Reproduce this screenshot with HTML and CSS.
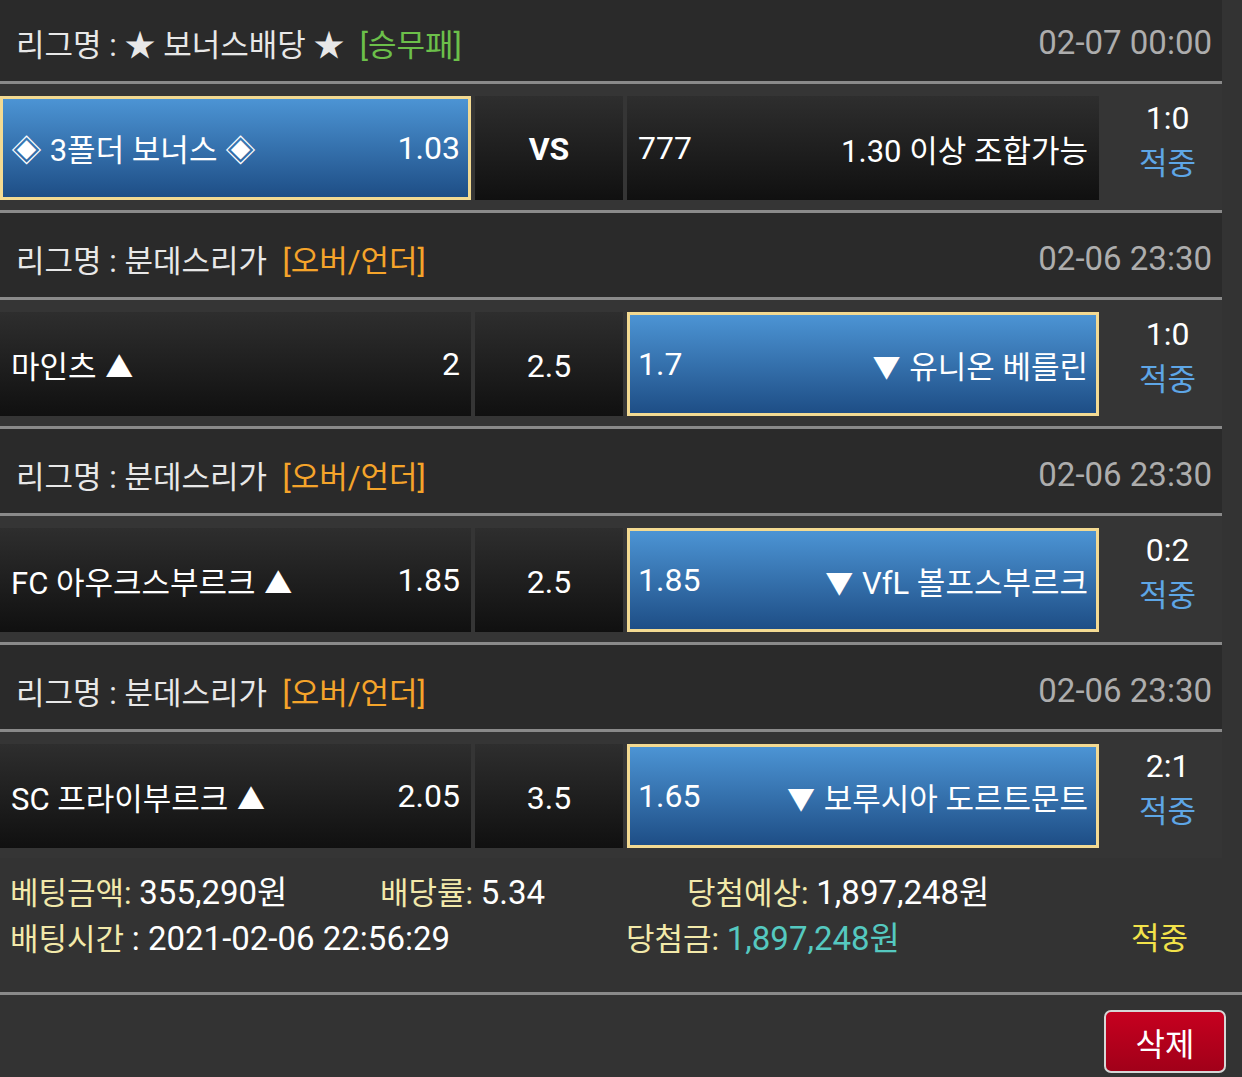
FILE: index.html
```html
<!DOCTYPE html>
<html lang="ko">
<head>
<meta charset="utf-8">
<title>베팅내역</title>
<link rel="stylesheet" href="styles.css">
</head>
<body>
<div class="list">
  <section class="game">
    <div class="league"><span class="lg-name">리그명 : ★ 보너스배당 ★ &nbsp;<span class="type-win">[승무패]</span></span><span class="date">02-07 00:00</span></div>
    <div class="row">
      <div class="cell home sel"><span class="team">◈ 3폴더 보너스 ◈</span><span class="odd">1.03</span></div>
      <div class="cell mid"><span class="vs">VS</span></div>
      <div class="cell away"><span class="odd">777</span><span class="team">1.30 이상 조합가능</span></div>
      <div class="score"><span class="sc">1:0</span><span class="res">적중</span></div>
    </div>
  </section>
  <section class="game">
    <div class="league"><span class="lg-name">리그명 : 분데스리가 &nbsp;<span class="type-ou">[오버/언더]</span></span><span class="date">02-06 23:30</span></div>
    <div class="row">
      <div class="cell home"><span class="team">마인츠 <span class="arw">▲</span></span><span class="odd">2</span></div>
      <div class="cell mid"><span class="line-val">2.5</span></div>
      <div class="cell away sel"><span class="odd">1.7</span><span class="team"><span class="arw">▼</span> 유니온 베를린</span></div>
      <div class="score"><span class="sc">1:0</span><span class="res">적중</span></div>
    </div>
  </section>
  <section class="game">
    <div class="league"><span class="lg-name">리그명 : 분데스리가 &nbsp;<span class="type-ou">[오버/언더]</span></span><span class="date">02-06 23:30</span></div>
    <div class="row">
      <div class="cell home"><span class="team">FC 아우크스부르크 <span class="arw">▲</span></span><span class="odd">1.85</span></div>
      <div class="cell mid"><span class="line-val">2.5</span></div>
      <div class="cell away sel"><span class="odd">1.85</span><span class="team"><span class="arw">▼</span> VfL 볼프스부르크</span></div>
      <div class="score"><span class="sc">0:2</span><span class="res">적중</span></div>
    </div>
  </section>
  <section class="game">
    <div class="league"><span class="lg-name">리그명 : 분데스리가 &nbsp;<span class="type-ou">[오버/언더]</span></span><span class="date">02-06 23:30</span></div>
    <div class="row last">
      <div class="cell home"><span class="team">SC 프라이부르크 <span class="arw">▲</span></span><span class="odd">2.05</span></div>
      <div class="cell mid"><span class="line-val">3.5</span></div>
      <div class="cell away sel"><span class="odd">1.65</span><span class="team"><span class="arw">▼</span> 보루시아 도르트문트</span></div>
      <div class="score"><span class="sc">2:1</span><span class="res">적중</span></div>
    </div>
  </section>
</div>
<div class="summary">
  <div class="sum-line">
    <span class="item w370"><span class="lbl">베팅금액:</span> <span class="val">355,290원</span></span>
    <span class="item w307"><span class="lbl">배당률:</span> <span class="val">5.34</span></span>
    <span class="item"><span class="lbl">당첨예상:</span> <span class="val">1,897,248원</span></span>
  </div>
  <div class="sum-line">
    <span class="item w616"><span class="lbl">배팅시간</span> <span class="val">: 2021-02-06 22:56:29</span></span>
    <span class="item w505"><span class="lbl">당첨금:</span> <span class="val win-amt">1,897,248원</span></span>
    <span class="item"><span class="hit">적중</span></span>
  </div>
</div>
<div class="actions">
  <button class="del" type="button">삭제</button>
</div>
</body>
</html>
```

FILE: styles.css
```css
body {
  margin: 0;
  background: #333333;
  color: #ffffff;
  font-family: Roboto, "Noto Sans CJK KR", sans-serif;
  font-size: 31px;
  overflow: hidden;
}

.list {
  width: 1222px;
  margin-top: -3px;
}

.league {
  height: 87px;
  box-sizing: border-box;
  border-bottom: 3px solid #8a8a8a;
  background: #2a2a2a;
  display: flex;
  align-items: center;
  justify-content: space-between;
  padding: 6px 10px 0 16px;
  white-space: nowrap;
}

.lg-name {
  color: #e8e8e8;
}

.type-win { color: #6cc04a; }
.type-ou { color: #f5a42a; }

.date {
  font-size: 33px;
  color: #adadad;
}

.row {
  height: 129px;
  box-sizing: border-box;
  border-bottom: 3px solid #8a8a8a;
  background: #353535;
  display: flex;
  padding: 12px 0 10px;
}

.row.last {
  height: 126px;
  border-bottom: none;
}

.cell {
  height: 104px;
  box-sizing: border-box;
  display: flex;
  align-items: center;
  justify-content: space-between;
  background: linear-gradient(#2e2e2e, #101010);
  padding: 0 11px;
  white-space: nowrap;
}

.home { width: 471px; }

.mid {
  width: 148px;
  margin-left: 4px;
  justify-content: center;
}

.away {
  width: 472px;
  margin-left: 4px;
}

.cell.sel {
  border: 3px solid #f3da92;
  background: linear-gradient(#4c94d4, #1e4e86);
  padding: 0 8px;
}

.arw {
  font-size: 28px;
  margin: 0 1px;
}

.odd { font-size: 32px; }

.vs {
  font-size: 32px;
  font-weight: bold;
  padding-top: 2px;
}

.line-val {
  font-size: 32px;
  padding-top: 4px;
}

.score {
  flex: 1;
  display: flex;
  flex-direction: column;
  align-items: center;
  line-height: 45px;
  padding-left: 14px;
}

.sc { font-size: 32px; }

.res {
  color: #5ea6e6;
}

.summary {
  padding: 12px 0 30px 10px;
  border-bottom: 3px solid #8a8a8a;
  line-height: 45px;
}

.sum-line {
  display: flex;
  white-space: nowrap;
}

.w370 { width: 370px; }
.w307 { width: 307px; }
.w616 { width: 616px; }
.w505 { width: 505px; }

.lbl {
  color: #f2e9aa;
}

.val { font-size: 33px; }

.win-amt { color: #55c9c0; }

.hit {
  color: #f2e24a;
}

.actions {
  display: flex;
  justify-content: flex-end;
  padding: 15px 16px 0 0;
}

.del {
  width: 122px;
  height: 63px;
  box-sizing: border-box;
  border: 2px solid #d6d6d6;
  border-radius: 7px;
  background: linear-gradient(#c6001f, #a10019);
  color: #ffffff;
  font-family: Roboto, "Noto Sans CJK KR", sans-serif;
  font-size: 32px;
  padding: 0;
}
```
